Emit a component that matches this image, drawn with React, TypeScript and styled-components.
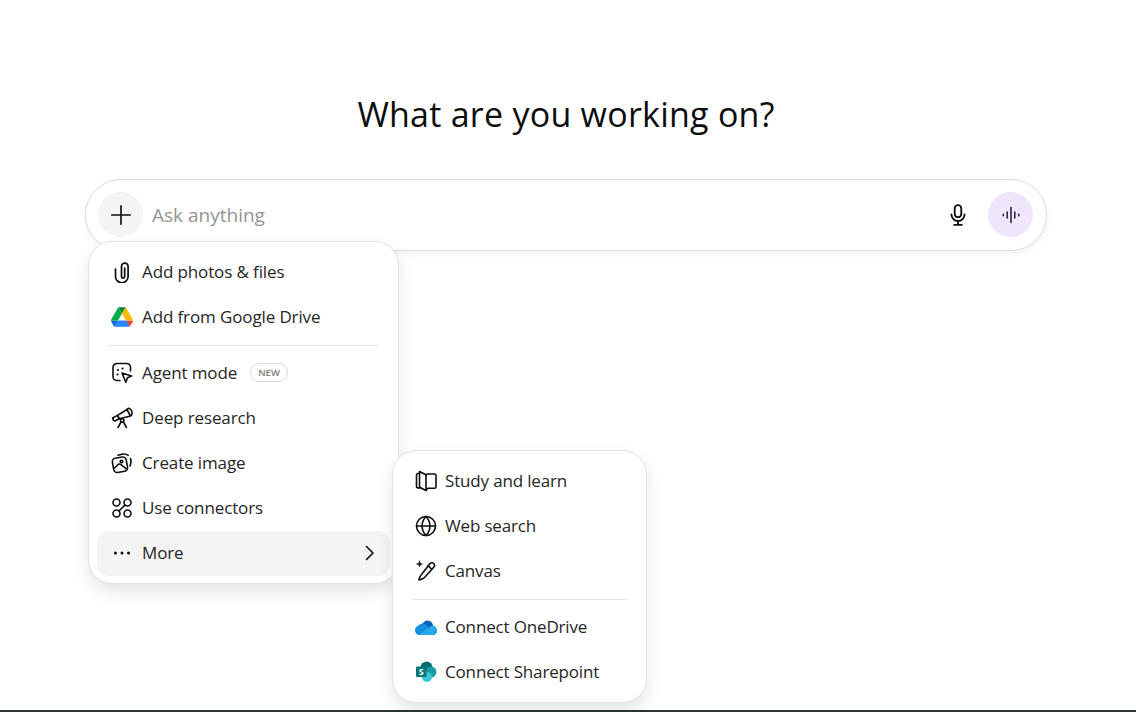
import React from "react";
import styled, { createGlobalStyle } from "styled-components";

const Global = createGlobalStyle`
  html, body { margin: 0; padding: 0; background: #fff; }
  body { font-family: "Open Sans", "Noto Sans", "Liberation Sans", sans-serif; color: #0d0d0d; }
`;

const Page = styled.div`
  height: 712px;
  box-sizing: border-box;
  border-bottom: 2px solid #2a3533;
  display: flex;
  flex-direction: column;
  align-items: center;
  padding: 91px 4px 0 0;
  overflow: hidden;
`;

const Title = styled.h1`
  margin: 0 0 41px;
  font-size: 34px;
  line-height: 47px;
  font-weight: 400;
  letter-spacing: 0.25px;
  color: #0d0d0d;
  white-space: nowrap;
`;

const Composer = styled.div`
  position: relative;
  width: 962px;
  height: 72px;
  box-sizing: border-box;
  border: 1px solid #dcdcdc;
  border-radius: 36px;
  box-shadow: 0 3px 6px rgba(0, 0, 0, 0.05);
  display: flex;
  align-items: center;
  padding: 0 13px 0 12px;
  background: #fff;
`;

const RoundButton = styled.div<{ $bg?: string }>`
  width: 45px;
  height: 45px;
  margin-bottom: 1px;
  border-radius: 50%;
  flex: none;
  display: flex;
  align-items: center;
  justify-content: center;
  background: ${(p) => p.$bg ?? "transparent"};
`;

const Placeholder = styled.div`
  flex: 1;
  margin-left: 9px;
  font-size: 19px;
  color: #949494;
`;

const MicSlot = styled.div`
  display: flex;
  margin-right: 18px;
`;

const Item = styled.div<{ $active?: boolean }>`
  height: 45px;
  box-sizing: border-box;
  display: flex;
  align-items: center;
  gap: 9px;
  padding: 0 13px 2px 14px;
  border-radius: 12px;
  font-size: 17px;
  letter-spacing: -0.12px;
  color: #262626;
  background: ${(p) => (p.$active ? "#f4f4f4" : "transparent")};
`;

const Menu = styled.div`
  position: absolute;
  left: 2px;
  top: 61px;
  width: 311px;
  height: 343px;
  box-sizing: border-box;
  padding: 8px 8px 0;
  border: 1px solid #e2e2e2;
  border-radius: 24px;
  background: #fff;
  box-shadow: 0 8px 16px rgba(0, 0, 0, 0.1);
`;

const SubMenu = styled(Menu)`
  left: 306px;
  top: 270px;
  width: 255px;
  height: 253px;
  z-index: 2;

  ${Item} {
    gap: 8px;
    letter-spacing: -0.16px;
  }
`;

const IconBox = styled.span`
  width: 22px;
  height: 22px;
  flex: none;
  display: flex;
  align-items: center;
  justify-content: center;
`;

const Spacer = styled.span`
  flex: 1;
`;

const Divider = styled.div`
  height: 1px;
  background: #e6e6e6;
  margin: 5px 11px;
`;

const Badge = styled.span`
  margin-left: 4px;
  height: 17px;
  padding: 0 7px;
  border: 1px solid #dcdcdc;
  border-radius: 9px;
  font-size: 9.5px;
  font-weight: 600;
  letter-spacing: 0;
  line-height: 17px;
  color: #7c7c7c;
`;

const Svg = ({ children, size = 22 }: { children: React.ReactNode; size?: number }) => (
  <svg width={size} height={size} viewBox="0 0 22 22" fill="none" stroke="#0d0d0d" strokeWidth={1.6} strokeLinecap="round" strokeLinejoin="round">
    {children}
  </svg>
);

const Plus = () => (
  <Svg size={24}>
    <path d="M11 2.5v17M2.5 11h17" strokeWidth={1.5} />
  </Svg>
);
const Mic = () => (
  <Svg size={24}>
    <rect x="8" y="2" width="6" height="11" rx="3" strokeWidth={1.7} />
    <path d="M5 10.5a6 6 0 0 0 12 0M11 16.5v3.5M7.5 20h7" strokeWidth={1.7} />
  </Svg>
);
const Voice = () => (
  <svg width="22" height="22" viewBox="0 0 22 22" fill="none" stroke="#1f1f2e" strokeLinecap="round">
    <path d="M11 3.500v15" strokeWidth={1.5} />
    <path d="M7.200 8v6M14.800 8v6" strokeWidth={1.5} />
    <path d="M3.300 10.200v1.600M18.700 10.200v1.600" strokeWidth={1.5} />
  </svg>
);
const Clip = () => (
  <Svg>
    <path d="M4.500 8v7.500a6.300 6.300 0 0 0 12.600 0V5.500a3.300 3.300 0 0 0-6.600 0v10a1.600 1.600 0 0 0 3.200 0V7" strokeWidth={1.7} />
  </Svg>
);
const Drive = () => (
  <svg width="22" height="20" viewBox="0 0 87.300 78">
    <path d="m6.600 66.850 3.850 6.650c.8 1.400 1.950 2.500 3.300 3.300l13.750-23.800h-27.500c0 1.550.4 3.100 1.200 4.500z" fill="#0066da" />
    <path d="m43.650 25-13.750-23.800c-1.350.8-2.500 1.900-3.300 3.300l-25.400 44a9.060 9.060 0 0 0 -1.200 4.500h27.500z" fill="#00ac47" />
    <path d="m73.550 76.800c1.350-.8 2.500-1.900 3.300-3.300l1.600-2.750 7.650-13.250c.8-1.400 1.200-2.950 1.200-4.500h-27.502l5.852 11.500z" fill="#ea4335" />
    <path d="m43.650 25 13.750-23.800c-1.350-.8-2.900-1.200-4.500-1.200h-18.500c-1.600 0-3.150.45-4.500 1.200z" fill="#00832d" />
    <path d="m59.800 53h-32.300l-13.750 23.800c1.350.8 2.900 1.200 4.500 1.200h50.800c1.600 0 3.150-.45 4.500-1.200z" fill="#2684fc" />
    <path d="m73.400 26.500-12.700-22c-.8-1.400-1.950-2.500-3.300-3.300l-13.750 23.800 16.150 28h27.450c0-1.550-.4-3.100-1.200-4.500z" fill="#ffba00" />
  </svg>
);
const Agent = () => (
  <Svg>
    <path d="M9 18.500H6a4 4 0 0 1-4-4v-9a4 4 0 0 1 4-4h9.500a4 4 0 0 1 4 4V9" />
    <path d="M11 11l9.500 3-4 1.800-1.700 4.400z" />
    <path d="M7 8h.01M11.500 6.500h.01M6.500 12.500h.01" strokeWidth={2.2} />
  </Svg>
);
const Telescope = () => (
  <Svg>
    <path d="M1.500 11l5-2.600 1.700 3.400-3.800 1.900a1.500 1.500 0 0 1-2-.7l-.4-.7c-.3-.5-.1-1 .5-1.300z" />
    <path d="M6.500 8.400L16 2.500l3.500 6.500-11.300 2.800z" />
    <path d="M15.800 2.800a2 2 0 0 1 3.200-1c1.300 1 2.400 3.300 2 5a2 2 0 0 1-1.700 2" />
    <circle cx="11.200" cy="13.500" r="1.700" />
    <path d="M10 15l-3 5.500M12.400 15l3 5.500" />
  </Svg>
);
const CreateImage = () => (
  <Svg>
    <rect x="2" y="5.500" width="14" height="14.500" rx="3.500" transform="rotate(-10 9 13)" />
    <path d="M7 3.200l5-1.200c2-.2 3.700.2 5.200 1.300M19.500 6.500c.8 2 .6 5-.5 7.500" />
    <circle cx="10.500" cy="9.500" r="1.300" />
    <path d="M3.500 16l3.500-3.500c1-.7 2-.7 3 .2l5 4" />
  </Svg>
);
const Connectors = () => (
  <Svg>
    <circle cx="5.500" cy="5.500" r="3.500" />
    <circle cx="16.500" cy="5.500" r="3.500" />
    <circle cx="5.500" cy="16.500" r="3.500" />
    <circle cx="16.500" cy="16.500" r="3.500" />
    <path d="M14 8l-6 6" />
  </Svg>
);
const Dots = () => (
  <svg width="22" height="22" viewBox="0 0 22 22" fill="#0d0d0d">
    <circle cx="4.500" cy="11" r="1.500" />
    <circle cx="11" cy="11" r="1.500" />
    <circle cx="17.500" cy="11" r="1.500" />
  </svg>
);
const Chevron = () => (
  <svg width="14" height="16" viewBox="0 0 14 16" fill="none" stroke="#0d0d0d" strokeWidth={1.6} strokeLinecap="round" strokeLinejoin="round">
    <path d="M3.500 1.500L10 8l-6.500 6.500" />
  </svg>
);
const Book = () => (
  <Svg>
    <path d="M4.500 3.500H3.200c-1 0-1.700.7-1.700 1.700v11c0 1 .7 1.700 1.700 1.700h2" />
    <path d="M4.500 1.500l5.400 2.700c.7.300 1.100.9 1.100 1.600v14.700l-5-2.500c-1-.5-1.500-1.200-1.500-2.200z" />
    <path d="M11 5.500c0-.8.7-1.500 1.500-1.500h7c1 0 1.500.7 1.500 1.500v11c0 1-.5 1.700-1.500 1.700H13L11 20.500" />
  </Svg>
);
const Globe = () => (
  <Svg>
    <circle cx="11" cy="11" r="9.500" />
    <path d="M1.500 11h19M11 1.500c-5.300 5.800-5.300 13.200 0 19M11 1.500c5.300 5.800 5.300 13.200 0 19" />
  </Svg>
);
const Pencil = () => (
  <Svg>
    <path d="M15 3.500a2.600 2.600 0 0 1 3.700 3.700L9.500 17.500c-1.500 1.500-3 2-5.500 2.500.3-2.500 1-4 2.500-5.500z" />
    <path d="M13 5.500l3.700 3.700" />
    <path d="M4.500 1l.8 2.200 2.200.8-2.200.8-.8 2.200-.8-2.200L1.500 4l2.200-.8z" fill="#0d0d0d" strokeWidth={0.5} />
  </Svg>
);
const OneDrive = () => (
  <svg width="24" height="17" viewBox="0 0 24 16" preserveAspectRatio="none">
    <path d="M9 4.500a6.200 6.200 0 0 1 10.800 2.700L14 11 7 7z" fill="#0364b8" />
    <path d="M9 4.500 4 7.200l-.6.100L15 16l5-3z" fill="#0f78d4" />
    <path d="M5 16h14.200c2.700 0 4.800-1.800 4.800-4.100 0-2.500-2.200-4.700-4.800-4.700-2.300 0-3.500 1.300-4.200 2.300-1.300-2.500-4-4.500-7-3.200C6.700 5 4 6.500 3.400 7.300 1.300 8 0 9.700 0 11.500 0 14 2.200 16 5 16z" fill="#1490df" />
    <path d="M5 16h14.200c2.700 0 4.800-1.800 4.800-4.100 0-2.500-2.200-4.700-4.800-4.700-2.300 0-3.500 1.300-4.200 2.300-3.500 1.800-6.500 3.700-10 6.500z" fill="#28a8ea" />
  </svg>
);
const Share = () => (
  <svg width="22" height="22" viewBox="0 0 22 22">
    <circle cx="11.500" cy="6.500" r="6" fill="#036c70" />
    <circle cx="16" cy="11" r="5.500" fill="#1a9ba1" />
    <circle cx="12" cy="16" r="5" fill="#37c6d0" />
    <rect x="1" y="5.500" width="10.500" height="10.500" rx="1" fill="#03787c" />
    <text x="6.200" y="14" textAnchor="middle" fontSize="9" fontWeight="700" fill="#fff" fontFamily="Open Sans, sans-serif">S</text>
  </svg>
);

export default function App() {
  return (
    <Page>
      <Global />
      <Title>What are you working on?</Title>
      <Composer>
        <RoundButton $bg="#f4f4f4"><Plus /></RoundButton>
        <Placeholder>Ask anything</Placeholder>
        <MicSlot><Mic /></MicSlot>
        <RoundButton $bg="#efe6fb"><Voice /></RoundButton>
        <Menu>
          <Item><IconBox><Clip /></IconBox>Add photos &amp; files</Item>
          <Item><IconBox><Drive /></IconBox>Add from Google Drive</Item>
          <Divider />
          <Item><IconBox><Agent /></IconBox>Agent mode<Badge>NEW</Badge></Item>
          <Item><IconBox><Telescope /></IconBox>Deep research</Item>
          <Item><IconBox><CreateImage /></IconBox>Create image</Item>
          <Item><IconBox><Connectors /></IconBox>Use connectors</Item>
          <Item $active><IconBox><Dots /></IconBox>More<Spacer /><Chevron /></Item>
        </Menu>
        <SubMenu>
          <Item><IconBox><Book /></IconBox>Study and learn</Item>
          <Item><IconBox><Globe /></IconBox>Web search</Item>
          <Item><IconBox><Pencil /></IconBox>Canvas</Item>
          <Divider />
          <Item><IconBox><OneDrive /></IconBox>Connect OneDrive</Item>
          <Item><IconBox><Share /></IconBox>Connect Sharepoint</Item>
        </SubMenu>
      </Composer>
    </Page>
  );
}
